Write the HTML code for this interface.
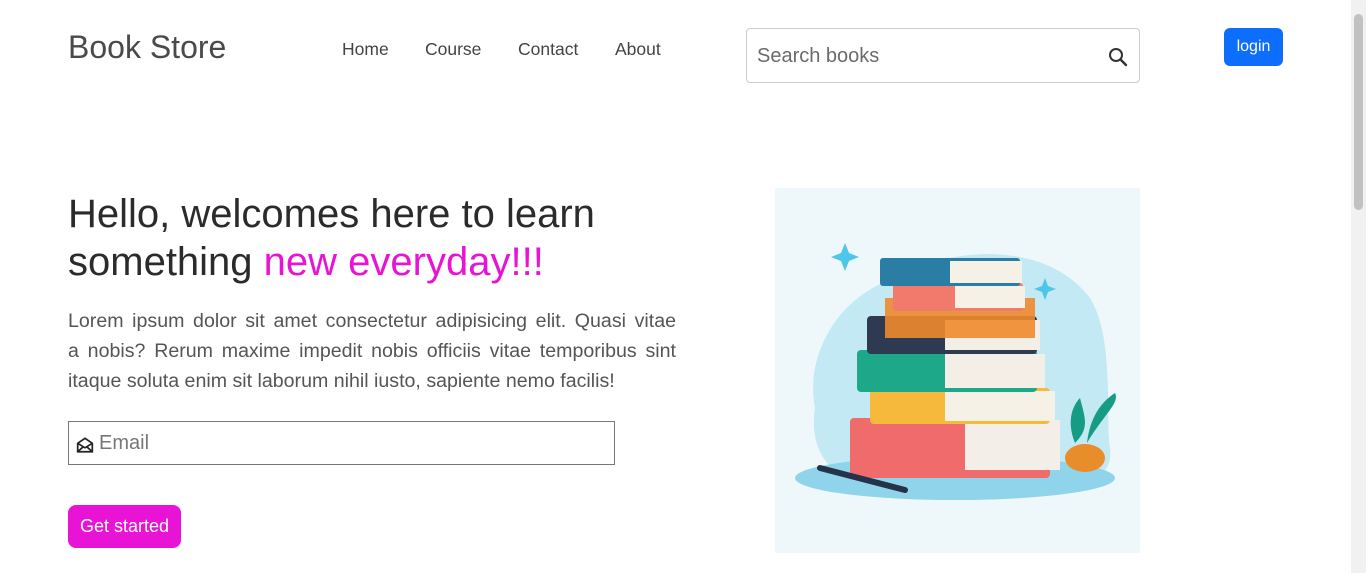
<!DOCTYPE html>
<html><head><style>
*{margin:0;padding:0;box-sizing:border-box}
body{width:1366px;height:573px;overflow:hidden;background:#fff;font-family:"Liberation Sans",Arial,sans-serif;position:relative}
.a{position:absolute}
.nav a{position:absolute;top:39px;font-size:17.5px;color:#444;text-decoration:none}
.p span{display:block;text-align:justify;text-align-last:justify;white-space:nowrap}
</style></head><body>
<div class="a" style="left:68px;top:29px;font-size:32px;color:#4a4a4a">Book Store</div>
<div class="nav"><a style="left:342px">Home</a><a style="left:425px">Course</a><a style="left:518px">Contact</a><a style="left:615px">About</a></div>
<div class="a" style="left:746px;top:28px;width:394px;height:55px;border:1px solid #ccc;border-radius:4px"></div>
<div class="a" style="left:757px;top:45px;font-size:20px;color:#6b6b6b">Search books</div>
<svg class="a" style="left:1107px;top:46px" width="22" height="22" viewBox="0 0 22 22"><circle cx="9" cy="9" r="6" fill="none" stroke="#333" stroke-width="2"/><path d="M13.5 13.5L19 19" stroke="#333" stroke-width="2.4" stroke-linecap="round"/></svg>
<div class="a" style="left:1224px;top:28px;width:59px;height:38px;background:#0d6efd;border-radius:6px;color:#fff;font-size:16px;text-align:center;line-height:37px">login</div>
<div class="a" style="left:68px;top:190px;font-size:40px;line-height:48px;color:#2b2b2b;width:680px">Hello, welcomes here to learn<br>something <span style="color:#e913d6">new everyday!!!</span></div>
<div class="a p" style="left:68px;top:306px;width:608px;font-size:19.6px;line-height:30px;color:#555"><span>Lorem ipsum dolor sit amet consectetur adipisicing elit. Quasi vitae</span><span>a nobis? Rerum maxime impedit nobis officiis vitae temporibus sint</span><span style="text-align-last:left">itaque soluta enim sit laborum nihil iusto, sapiente nemo facilis!</span></div>
<div class="a" style="left:68px;top:421px;width:547px;height:44px;border:1px solid #777"></div>
<svg class="a" style="left:76px;top:436px" width="18" height="18" viewBox="0 0 16 16"><path d="M1.5 6.5L8 2l6.5 4.5V14h-13z M1.5 6.5L8 10.5l6.5-4 M1.5 14L6.5 9.5 M14.5 14L9.5 9.5" fill="none" stroke="#222" stroke-width="1.5"/></svg>
<div class="a" style="left:99px;top:432px;font-size:20px;color:#777">Email</div>
<div class="a" style="left:68px;top:505px;width:113px;height:43px;background:#e913d6;border-radius:8px;color:#fff;font-size:18px;text-align:center;line-height:42px">Get started</div>
<svg class="a" style="left:775px;top:188px" width="365" height="365" viewBox="0 0 365 365">
<rect width="365" height="365" fill="#eef8fa"/>
<path d="M40 220C30 170 60 110 120 90C170 60 270 50 315 110C340 150 330 230 335 260C340 300 290 310 180 310C90 310 30 290 40 220Z" fill="#c3e9f4"/>
<ellipse cx="180" cy="290" rx="160" ry="22" fill="#8fd4ea"/>
<rect x="75" y="230" width="200" height="60" rx="4" fill="#f06b6b"/><rect x="190" y="232" width="95" height="50" fill="#f3efe8"/>
<rect x="95" y="200" width="180" height="36" rx="4" fill="#f6b93b"/><rect x="170" y="203" width="110" height="30" fill="#f6f1e7"/>
<rect x="82" y="162" width="180" height="42" rx="4" fill="#1ea88a"/><rect x="170" y="166" width="100" height="34" fill="#f4efe6"/>
<rect x="92" y="128" width="170" height="38" rx="4" fill="#2d3a52"/><rect x="170" y="132" width="95" height="30" fill="#f4efe6"/>
<rect x="110" y="110" width="150" height="40" fill="#f08a2c" opacity=".9"/>
<rect x="118" y="95" width="130" height="28" rx="3" fill="#f27a6c"/><rect x="180" y="98" width="70" height="22" fill="#f6f1e7"/>
<rect x="105" y="70" width="140" height="28" rx="3" fill="#2a7ea5"/><rect x="175" y="73" width="72" height="22" fill="#f6f1e7"/>
<ellipse cx="310" cy="270" rx="20" ry="14" fill="#e98c2a"/><path d="M300 255C290 230 300 215 305 210C310 230 315 240 300 255Z M312 255C330 225 345 215 340 205C325 215 315 230 312 255Z" fill="#169b85"/>
<path d="M45 280L130 302" stroke="#26324a" stroke-width="6" stroke-linecap="round"/>
<path d="M70 55l4 10 10 4-10 4-4 10-4-10-10-4 10-4z M270 90l3 8 8 3-8 3-3 8-3-8-8-3 8-3z" fill="#4ec6ea"/>
</svg>
<div class="a" style="left:1351px;top:0;width:15px;height:573px;background:#f1f1f1"></div>
<div class="a" style="left:1354px;top:14px;width:9px;height:196px;background:#c1c1c1;border-radius:5px"></div>
</body></html>
